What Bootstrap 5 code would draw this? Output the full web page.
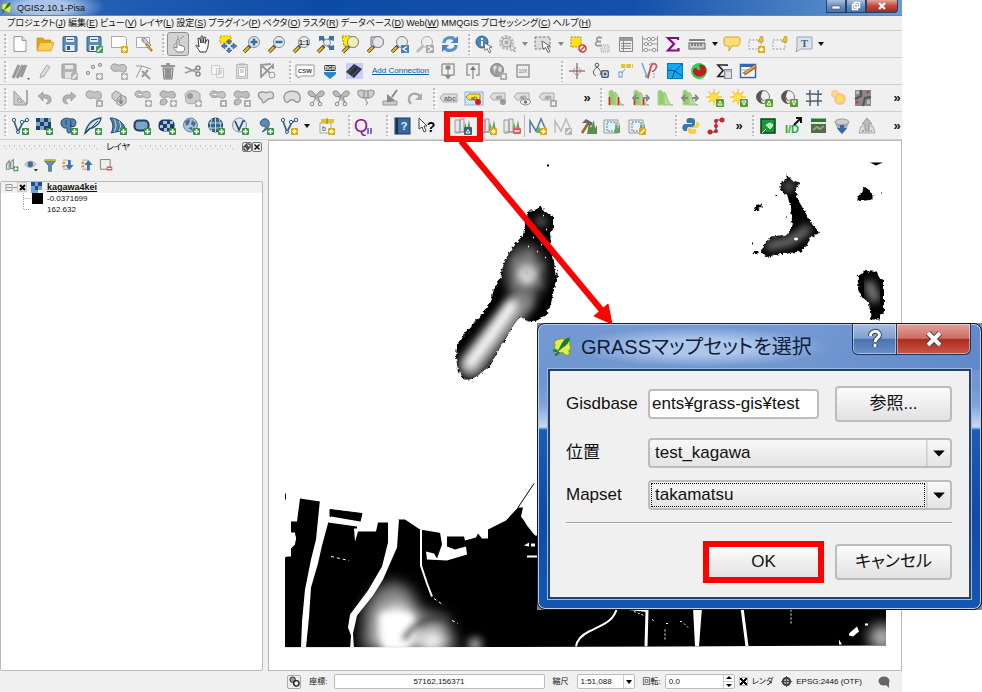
<!DOCTYPE html>
<html lang="ja">
<head>
<meta charset="utf-8">
<meta name="viewport" content="width=device-width, initial-scale=1">
<title>QGIS2.10.1-Pisa</title>
<link href="https://cdn.jsdelivr.net/npm/bootstrap@5.3.0/dist/css/bootstrap.min.css" rel="stylesheet">
<style>
body{font-family:"Liberation Sans","Noto Sans CJK JP",sans-serif;font-size:9px;line-height:12px;color:#111;background:#fff;font-feature-settings:"palt";height:100vh;overflow:hidden;padding-right:80px}
button{font:inherit;color:inherit}
.app-window{background:#f0f0f0;height:100%}
.title-strip{height:16px;background:radial-gradient(ellipse 60px 18px at 45px 7px,#a9c4e8 40%,transparent 100%),linear-gradient(90deg,#2d68b8,#0d4ca6 35%,#1350a9 70%,#4c83c6 90%,#6c9bd2);border-bottom:1px solid #6d85a8}
.win-ctl{height:13px;border:1px solid #24426e;border-top:0;width:20px;background:linear-gradient(#a9c1e0,#6a8dbd 50%,#4a72ac);padding:0}
.win-ctl.close-ctl{width:32px;background:linear-gradient(#e3a79a,#c4473a 50%,#a82a1f);border-radius:0 0 4px 0}
.menu-strip{height:15px;border-bottom:1px solid #ccc;padding-left:7px}
.menu-items{flex:0 1 584px}
.menu-items a{color:#111;text-decoration:none;white-space:nowrap}
.menu-items u{text-underline-offset:1px}
.tool-row{height:27px;border-bottom:1px solid #cfcfcf}
.tool-row.last-row{height:28px}
.grip{flex:0 0 10px;height:21px;background-image:radial-gradient(circle at 5px 1px,#bdbdbd 1px,transparent 1px),radial-gradient(circle at 7px 3px,#fff 1px,transparent 1px);background-size:10px 4px}
.tools{display:flex;justify-content:space-between;align-items:center;flex:0 0 auto}
.tools button{width:20px;height:24px;padding:0;border:0;background:none;display:flex;align-items:center;justify-content:center}
.tools button.drop{width:8px}
.tools button.active-tool{outline:1px solid #8f8f8f;background:#d2d2d2;border-radius:2px;height:22px}
.tools svg{width:20px;height:20px;flex:none}
.tools .drop svg{width:8px}
.w-20{width:20px}.w-45{width:45px}.w-69{width:69px}.w-95{width:95px}.w-119{width:119px}.w-144{width:144px}.w-191{width:191px}.w-267{width:267px}.w-292{width:292px}.w-326{width:326px}.w-351{width:351px}.w-415{width:415px}
.more{width:10px;font-size:13px;line-height:14px;font-weight:bold;padding:0;border:0;background:none;text-align:center}
.conn-link{font-size:8px;color:#00629e;width:58px;margin:0 8px;white-space:nowrap}
.sep-line{width:1px;height:22px;background:#bbb;margin:0 3px 0 2px}
.red-frame{position:absolute;left:-9px;top:-3px;width:39px;height:31px;border:6px solid #f00;pointer-events:none;z-index:3}
.side{flex:0 0 263px}
.dock-head{height:14px;padding:0 1px 0 2px}
.dots{height:6px;background-image:radial-gradient(circle,#c4c4c4 1px,transparent 1px),radial-gradient(circle,#d4d4d4 1px,transparent 1px);background-size:5px 6px,5px 6px;background-position:0 -1px,2px 2px}
.dock-btn{width:10px;height:10px;border:1px solid #777;border-radius:2px;background:#eee;padding:0;display:flex}
.dock-btn.extent-btn{width:14px;height:14px;border-color:#aaa}
.dock-tools{height:27px;padding:0 0 5px 5px}
.dock-tools .tools{width:108px}
.dock-tools .tools button{width:14px;height:18px}
.dock-tools .tools svg{width:14px;height:14px}
.tree-box{background:#fff;border:1px solid #b9b9b9;border-radius:2px;font-size:8px;line-height:11px}
.tree-row{height:11px}
.tree-row.picked{background:#f1f1f1}
.tree-row svg{width:46px;height:11px;flex:none}
.layer-name{font-size:9px}
.canvas{background:#fff;border:1px solid #b9b9b9;margin-left:5px;min-width:0}
.canvas svg{display:block}
.status{height:21px;padding-right:12px;font-size:8px}
.status input[type=text],.status select{height:15px;border:1px solid #bcbcbc;border-radius:2px;background:#fff;padding:0 3px;font-size:8px;line-height:12px;color:#111;appearance:none}
.status input.coord{width:211px;text-align:center;margin-left:6px}
.scale-box{width:58px}.spin-box{width:70px}
.pick-arrow{position:absolute;right:0;top:0;height:100%;pointer-events:none}
.tick{appearance:none;width:9px;height:9px;margin:0;border:1px solid #bbb;background:#eee}
.tick:checked{background:linear-gradient(45deg,transparent 36%,#000 37% 63%,transparent 64%),linear-gradient(-45deg,transparent 36%,#000 37% 63%,#fff 64%)}
.arrow-over{position:absolute;left:450px;top:138px;width:170px;height:190px;z-index:4;pointer-events:none}
.dlg-wrap{position:absolute;left:537px;top:323px;width:445px;z-index:3;background:linear-gradient(#8a8a8a,#333 20%,#222 80%,#888)}
.dlg{border:1px solid #0b1b38;border-radius:8px;box-shadow:inset 0 0 0 1px #b9d0ee;background:linear-gradient(90deg,transparent 60%,#3e6db355) 0 0/100% 46px no-repeat,linear-gradient(#7499d2,#6f96d0 60px,#7da2d8 80px,#c5daf2 103px,#1c5db4 106px,#0f4ba5 190px,#1556b3);padding:0 10px 10px}
.dlg-title{height:45px;font-size:20px;line-height:24px;color:#0f1d3c}
.title-glow{background:radial-gradient(ellipse closest-side,#adc7ea 40%,transparent);padding:8px 16px 8px 8px;margin-left:-8px}
.dlg-ctl{height:31px;border:1px solid #1d3763;border-top:0;padding:0;display:flex;align-items:center;justify-content:center;box-shadow:inset 0 0 0 1px #ffffff70}
.ctl-help{width:45px;border-radius:0 0 0 6px;background:linear-gradient(#a7bfe2,#7f9fce 48%,#4a73b1 50%,#6a90c8)}
.ctl-x{width:74px;border-left:0;border-radius:0 0 6px 0;background:linear-gradient(#dfa39c,#cf6d62 48%,#b02a1d 50%,#c8584a)}
.dlg-body{background:#f0f0f0;border:2px solid #24406e;outline:1px solid #9db9e2;padding:15px 17px 17px 16px;font-size:17px;line-height:20px}
.form-line{display:grid;grid-template-columns:82px minmax(0,1fr);align-items:center}
.form-line label{white-space:nowrap}
.fld{height:30px;border:2px solid #bcbcbc;border-radius:4px;background:#fff;padding:0 2px;font-size:17px;line-height:24px;color:#111;min-width:0}
input.fld{width:0}
select.fld{background:linear-gradient(#f8f8f8,#e4e4e4);padding:0 5px;appearance:none}
.focus-dots{position:absolute;left:3px;top:3px;right:27px;bottom:3px;border:1px dotted #000;pointer-events:none}
.push{height:36px;width:117px;border:2px solid #bcbcbc;border-radius:4px;background:linear-gradient(#fcfcfc,#e2e2e2);padding:0}
.push.push-ok{outline:6px solid #f00;outline-offset:-1px;width:111px;height:32px;border-width:1px;border-radius:0;margin-right:16px}
.rule{height:2px;background:#a3a3a3;border-bottom:1px solid #fff;margin:12px 0 20px}
</style>
<script src="https://cdn.jsdelivr.net/npm/bootstrap@5.3.0/dist/js/bootstrap.bundle.min.js"></script>
</head>
<body class="position-relative">
<svg class="d-none" aria-hidden="true">
<!-- corner badges -->
<symbol id="b-plus" viewBox="0 0 20 20"><rect x="12" y="12" width="7" height="7" rx="1" fill="#3f8d49"/><path d="M15.500 13v5M13 15.500h5" stroke="#fff" stroke-width="1.500"/></symbol>
<symbol id="b-star" viewBox="0 0 20 20"><rect x="12" y="12" width="7" height="7" rx="1" fill="#d9a91e"/><path d="M15.500 13v5M13 15.500h5M14 14l3 3M17 14l-3 3" stroke="#fff6c0"/></symbol>
<symbol id="b-gray" viewBox="0 0 20 20"><rect x="12" y="12" width="7" height="7" rx="1" fill="#b3b3b3"/><path d="M15.500 13v5M13 15.500h5M14 14l3 3M17 14l-3 3" stroke="#f4f4f4"/></symbol>
<symbol id="b-x" viewBox="0 0 20 20"><rect x="12" y="12" width="7" height="7" rx="1" fill="#aaa"/><path d="M14 14l3 3M17 14l-3 3" stroke="#fff" stroke-width="1.400"/></symbol>
<symbol id="b-min" viewBox="0 0 20 20"><rect x="11" y="12" width="8" height="6" rx="1" fill="#e35a58"/><path d="M12.500 15h5" stroke="#fff" stroke-width="1.500"/></symbol>
<symbol id="b-up" viewBox="0 0 20 20"><rect x="11" y="11" width="8" height="8" rx="1" fill="#5e9c35"/><path d="M13 17l2-4 2 4z" fill="none" stroke="#fff"/></symbol>
<symbol id="b-down" viewBox="0 0 20 20"><rect x="11" y="11" width="8" height="8" rx="1" fill="#5e9c35"/><path d="M13 13l2 4 2-4z" fill="none" stroke="#fff"/></symbol>
<symbol id="b-blue" viewBox="0 0 20 20"><rect x="11" y="11" width="8" height="8" rx="1" fill="#35607e"/><path d="M13 17l2-3.500 2 3.500z" fill="none" stroke="#fff"/></symbol>
<symbol id="b-pen" viewBox="0 0 20 20"><rect x="12" y="12" width="7" height="7" rx="1" fill="#4b9a55"/><path d="M13.500 17.500l4-4" stroke="#fff" stroke-width="1.500"/></symbol>
<symbol id="b-penG" viewBox="0 0 20 20"><rect x="12" y="12" width="7" height="7" rx="1" fill="#b5b5b5"/><path d="M13.500 17.500l4-4" stroke="#fff" stroke-width="1.500"/></symbol>
<symbol id="b-penY" viewBox="0 0 20 20"><rect x="12" y="12" width="7" height="7" rx="1" fill="#d9a91e"/><path d="M13.500 17.500l4-4" stroke="#fff" stroke-width="1.500"/></symbol>
<symbol id="caret" viewBox="0 0 8 20"><path d="M1 8h6l-3 4z" fill="#111"/></symbol>
<symbol id="caretG" viewBox="0 0 8 20"><path d="M1 8h6l-3 4z" fill="#888"/></symbol>
<!-- file and map navigation -->
<symbol id="new" viewBox="0 0 20 20"><path d="M4 2.500h8l4 4v11H4z" fill="#fff" stroke="#999"/><path d="M12 2.500v4h4" fill="#ddd" stroke="#999"/></symbol>
<symbol id="open" viewBox="0 0 20 20"><path d="M2 16V4h6l1 2h7v3" fill="#e0a520" stroke="#b8860b" stroke-width=".6"/><path d="M2 17L5 8.500h14L16 17z" fill="#f7cf57" stroke="#d99a12" stroke-width=".7"/></symbol>
<symbol id="save" viewBox="0 0 20 20"><rect x="3" y="2.500" width="14" height="15" rx="1" fill="#5d8cbc" stroke="#355f8a"/><rect x="6" y="3" width="8" height="5" fill="#e8eef4"/><path d="M7 5.500h6" stroke="#355f8a"/><rect x="5.500" y="11" width="9" height="6" fill="#e8eef4"/><rect x="7" y="12" width="3" height="4" fill="#355f8a"/></symbol>
<symbol id="saveG" viewBox="0 0 20 20"><rect x="3" y="3" width="14" height="14" rx="1" fill="#b5b5b5" stroke="#999"/><rect x="6" y="4" width="8" height="4" fill="#e9e9e9"/><rect x="6" y="11" width="7" height="6" fill="#e4e4e4"/></symbol>
<symbol id="layout" viewBox="0 0 20 20"><path d="M2.500 2.500h13l2 2v9h-15z" fill="#fff" stroke="#aaa"/></symbol>
<symbol id="wrench" viewBox="0 0 20 20"><path d="M2.500 3.500h13v10h-13z" fill="#fff" stroke="#aaa"/><path d="M8 5a3 3 0 0 1 5 2l4 4-2 2-4-4a3 3 0 0 1-3-4l2 2z" fill="#ccc" stroke="#777" stroke-width=".7"/><path d="M12 10l6 7" stroke="#9a7b1e" stroke-width="2.500"/><path d="M13 11l4 5" stroke="#f1c942"/></symbol>
<symbol id="touch" viewBox="0 0 20 20"><path d="M9 18c-2-3-4-4-3-5l3 1V6c0-1 2-1 2 0v5l5 1.500c1 .5 1 4-1 5.500z" fill="#fff" stroke="#777" stroke-width=".9"/><path d="M10 5V2M12 5l4-3M9 8L5 12" fill="none" stroke="#888" stroke-width=".8"/></symbol>
<symbol id="hand" viewBox="0 0 20 20"><path d="M7 18C5 14 2 12 3.500 11L6 13 5 5c0-1.500 1.500-1.500 2 0l1 4V3c0-1.500 2-1.500 2 0v6l1-5c.3-1.400 2-1 1.800.4L12 9.500l2-3.500c1-1 2 0 1.600 1L15 12c0 3-2 4-2 6z" fill="#fff" stroke="#333"/></symbol>
<symbol id="pansel" viewBox="0 0 20 20"><path d="M3 2h11v7H3z" fill="#ffe60a" stroke="#bda900" stroke-dasharray="2 1"/><g fill="#4a7cb2" stroke="#29527f" stroke-width=".5"><path d="M12 5l3 3h-2v2h-2V8H9zM12 19l3-3h-2v-2h-2v2H9zM4 12l4-3v2h2v2H8v2zM20 12l-4-3v2h-2v2h2v2z"/></g></symbol>
<symbol id="lens" viewBox="0 0 20 20"><path d="M2 18l6-6" stroke="#333" stroke-width="3.500"/><path d="M2 18l5-5" stroke="#eab422" stroke-width="2.300"/><circle cx="12" cy="8" r="5.500" fill="#e4ebee" stroke="#888"/></symbol>
<symbol id="lensG" viewBox="0 0 20 20"><path d="M2 18l6-6" stroke="#bbb" stroke-width="3"/><circle cx="12" cy="8" r="5.500" fill="#eee" stroke="#aaa"/></symbol>
<symbol id="o-plus" viewBox="0 0 20 20"><path d="M12 4.500v7M8.500 8h7" stroke="#2f6ead" stroke-width="2.500"/></symbol>
<symbol id="o-minus" viewBox="0 0 20 20"><path d="M8.500 8h7" stroke="#2f6ead" stroke-width="2.500"/></symbol>
<symbol id="o-one" viewBox="0 0 20 20"><text x="12" y="11" font-size="7" font-weight="bold" text-anchor="middle" fill="#222">1:1</text></symbol>
<symbol id="full" viewBox="0 0 20 20"><path d="M2 18l6-6" stroke="#333" stroke-width="3.500"/><path d="M2 18l5-5" stroke="#eab422" stroke-width="2.300"/><path d="M3 2h5v2l3 3-2 2-3-3-3 1zM18 2h-5v2l-3 3 2 2 3-3 3 1zM18 16h-5v-2l-3-3 2-2 3 3 3-1z" fill="#3f6fa3"/><circle cx="11" cy="8.500" r="3.500" fill="#e4ebee" stroke="#888"/></symbol>
<symbol id="o-sel" viewBox="0 0 20 20"><path d="M1 2h9v10H3z" fill="#ffe60a" stroke="#9d8d00" stroke-dasharray="2 1"/><circle cx="12" cy="8" r="5.500" fill="#f4edb4" stroke="#888"/></symbol>
<symbol id="o-layer" viewBox="0 0 20 20"><path d="M5 3h9v9H5z" fill="#d7d7de" stroke="#777"/><circle cx="12" cy="8" r="5.500" fill="#e4e4ea" stroke="#888"/></symbol>
<symbol id="o-prev" viewBox="0 0 20 20"><rect x="11" y="11" width="8" height="8" fill="#4a7db5"/><path d="M17 12.500l-4 2.500 4 2.500" fill="none" stroke="#fff" stroke-width="1.300"/></symbol>
<symbol id="o-next" viewBox="0 0 20 20"><rect x="11" y="11" width="8" height="8" fill="#aaa"/><path d="M13 12.500l4 2.500-4 2.500" fill="none" stroke="#fff" stroke-width="1.300"/></symbol>
<symbol id="refresh" viewBox="0 0 20 20"><path d="M4 9c0-6 9-7 11-3M16 11c0 6-9 7-11 3" fill="none" stroke="#5b93ca" stroke-width="3.200"/><path d="M18 2v7h-7zM2 18v-7h7z" fill="#4681bd"/></symbol>
<symbol id="ident" viewBox="0 0 20 20"><circle cx="8" cy="8" r="6" fill="#4d86bd" stroke="#2e6497"/><path d="M8 7v5M8 4v2" stroke="#fff" stroke-width="2"/><path d="M10 9l8 4-3 1 2 4-2 .5-2-4-2 2z" fill="#fff" stroke="#555" stroke-width=".8"/></symbol>
<symbol id="gear" viewBox="0 0 20 20"><circle cx="8.500" cy="8.500" r="6" fill="none" stroke="#bbb" stroke-width="3" stroke-dasharray="2.500 1.200"/><circle cx="8.500" cy="8.500" r="4.500" fill="#ddd" stroke="#999"/><circle cx="8.500" cy="8.500" r="2" fill="#aaa"/><path d="M12 11l6 3-2.500 1 2 3-3-2-1.500 1z" fill="#eee" stroke="#888" stroke-width=".7"/></symbol>
<symbol id="selrect" viewBox="0 0 20 20"><path d="M2 3h15v12H2z" fill="#ddd" stroke="#777" stroke-dasharray="2.500 1.500"/><path d="M9 7l8 5-3 .5 3 5-2 1-2.500-5L10 15z" fill="#fff" stroke="#444" stroke-width=".8"/></symbol>
<symbol id="desel" viewBox="0 0 20 20"><path d="M3 3h10v10H3z" fill="#ffe11a" stroke="#a89512" stroke-dasharray="2 1"/><circle cx="14.500" cy="14.500" r="3.500" fill="#fff" stroke="#dd3532" stroke-width="1.500"/><path d="M12 17l5-5" stroke="#dd3532" stroke-width="1.500"/></symbol>
<symbol id="eps" viewBox="0 0 20 20"><path d="M10 4c-4-2-7 1-4 3.500-4 1-3 6 3.500 3.500M6 7.500h3" fill="none" stroke="#999" stroke-width="1.800"/><path d="M9 11h8v7H9z" fill="#ddd" stroke="#aaa" stroke-dasharray="1 1"/></symbol>
<symbol id="tbl" viewBox="0 0 20 20"><path d="M3.500 3.500h13v14h-13z" fill="#eee" stroke="#888"/><path d="M3 5.500h14" stroke="#999" stroke-width="3"/><path d="M5 9.500h10M5 12h10M5 14.500h10M7.500 7v10" stroke="#888"/></symbol>
<symbol id="abacus" viewBox="0 0 20 20"><path d="M2.500 2v16M17.500 2v16M2 5h16M2 10h16M2 16h16" stroke="#999" fill="none"/><g fill="#fff" stroke="#999"><circle cx="9" cy="5" r="1.700"/><circle cx="13" cy="5" r="1.700"/><circle cx="6" cy="10" r="1.700"/><circle cx="10" cy="10" r="1.700"/><circle cx="6" cy="16" r="1.700"/><circle cx="14" cy="16" r="1.700"/></g></symbol>
<symbol id="sigma" viewBox="0 0 20 20"><path d="M15 6V4H5l6 6-6 6.500h10.500V14" fill="none" stroke="#8b0a86" stroke-width="2.200"/></symbol>
<symbol id="ruler" viewBox="0 0 20 20"><path d="M2 6h16" stroke="#444" stroke-width="1.300"/><rect x="2" y="9" width="16" height="6" fill="#c9ced3" stroke="#666"/><path d="M5 9v3M8 9v3M11 9v3M14 9v3" stroke="#444"/></symbol>
<symbol id="tip" viewBox="0 0 20 20"><path d="M4 3h12c2 0 2 1 2 4 0 4-1 5-3 5h-5l-3 5V12H4c-2 0-2-2-2-5 0-3 0-4 2-4z" fill="#fbdf74" stroke="#d3a62c"/></symbol>
<symbol id="bmk" viewBox="0 0 20 20"><path d="M3 6h12v9H3z" fill="#f2f2f2" stroke="#999" stroke-dasharray="2 1.500"/><path d="M12 8l3-6 2 1v5z" fill="#edc63a" stroke="#b5901b" stroke-width=".7"/></symbol>
<symbol id="txt" viewBox="0 0 20 20"><path d="M4 3h15v12H8l-5 3 1-4z" fill="#dbe4ee" stroke="#9aa5b1"/><text x="11.500" y="13" font-size="11" font-weight="bold" font-family="Liberation Serif" text-anchor="middle" fill="#47617b">T</text></symbol>
<!-- digitising -->
<symbol id="pens" viewBox="0 0 20 20"><path d="M3 17l6-13M7 17l6-13M11 16l5-12" stroke="#999" stroke-width="3"/><path d="M17 17h3l-1.500 2z" fill="#666"/></symbol>
<symbol id="pen1" viewBox="0 0 20 20"><path d="M5 17l1-4 6-9 3 2-6 9z" fill="#ddd" stroke="#aaa"/></symbol>
<symbol id="pts" viewBox="0 0 20 20"><g fill="#ccc" stroke="#999"><circle cx="4" cy="12" r="1.700"/><circle cx="9" cy="6" r="1.700"/><circle cx="16" cy="4" r="1.700"/></g></symbol>
<symbol id="blob" viewBox="0 0 20 20"><path d="M3 4c3-3 5 1 8 0 6-2 7 2 6 6-3 3-6-1-8 0-5 2-9-3-6-6z" fill="#c4c4c4" stroke="#9a9a9a"/></symbol>
<symbol id="node" viewBox="0 0 20 20"><path d="M3 17L9 5l9 3M3 5h6" fill="none" stroke="#999"/><path d="M9 10l8 8M15 9l-6 7" stroke="#999" stroke-width="2"/></symbol>
<symbol id="trash" viewBox="0 0 20 20"><path d="M5 7h10l-1 11H6z" fill="#ccc" stroke="#777"/><path d="M3 5h14M8 3h4M8 8v9M10 8v9M12 8v9" stroke="#777" stroke-width="1.400"/></symbol>
<symbol id="cut" viewBox="0 0 20 20"><path d="M2 6l11 5M2 12l11-4" stroke="#999" stroke-width="1.500"/><circle cx="15" cy="7" r="2" fill="none" stroke="#888" stroke-width="1.500"/><circle cx="15" cy="13" r="2" fill="none" stroke="#888" stroke-width="1.500"/></symbol>
<symbol id="copy" viewBox="0 0 20 20"><path d="M3.500 4.500h8v9h-8zM8.500 7.500h7v9h-7z" fill="#f4f4f4" stroke="#ccc"/><path d="M10 10h4M10 12h4" stroke="#bbb"/></symbol>
<symbol id="paste" viewBox="0 0 20 20"><path d="M4.500 3.500h11v14h-11z" fill="#ddd" stroke="#bbb"/><path d="M6.500 6.500h7v9h-7z" fill="#fff" stroke="#bbb"/><path d="M7 3h6M8 9h4M8 11h4" stroke="#aaa"/></symbol>
<symbol id="netx" viewBox="0 0 20 20"><path d="M4 3v14M4 4l12 11M4 16L16 4v4M4 4l10-1" fill="none" stroke="#999" stroke-width="1.800"/><circle cx="15" cy="14" r="3" fill="#eee" stroke="#999"/></symbol>
<symbol id="csw" viewBox="0 0 20 20"><path d="M1 4h18v11H6l-3 2v-2H1z" fill="#fff" stroke="#999"/><text x="10" y="12" font-size="6" font-weight="bold" text-anchor="middle" fill="#444">CSW</text></symbol>
<symbol id="bgr" viewBox="0 0 20 20"><rect x="4" y="4" width="12" height="6" rx="2" fill="#333"/><text x="10" y="9" font-size="5" font-weight="bold" text-anchor="middle" fill="#fff">BGR</text><path d="M4 11h12v2l-6 5-6-5z" fill="#1d8bd1"/></symbol>
<symbol id="chip" viewBox="0 0 20 20"><path d="M2 2h17v16H2z" fill="#ccccfa"/><path d="M2 11l8-8 8 5-8 9z" fill="#2d3340"/><path d="M4 12l7-7M8 15l7-7" stroke="#545d70"/></symbol>
<symbol id="tdown" viewBox="0 0 20 20"><path d="M4 3h12v11h-3M4 3v11h3" fill="none" stroke="#999" stroke-width="1.500"/><path d="M10 6v9M7 14l3 4 3-4zM8 5h4v3H8z" fill="#888" stroke="#888"/></symbol>
<symbol id="tup" viewBox="0 0 20 20"><path d="M4 3h12v11h-3M4 3v11h3M10 8v10" fill="none" stroke="#999" stroke-width="1.500"/><path d="M7 9l3-4 3 4z" fill="#777"/></symbol>
<symbol id="globeG" viewBox="0 0 20 20"><circle cx="9" cy="9" r="6.500" fill="#9c9c9c" stroke="#888"/><path d="M5 6c3-3 5 0 3 2s0 4-1 5M11 5l3 2-1 4-3-1z" fill="#ddd"/></symbol>
<symbol id="tenx" viewBox="0 0 20 20"><rect x="4" y="4" width="12" height="12" fill="#eee" stroke="#999" stroke-width="1.500"/><text x="10" y="12" font-size="5" text-anchor="middle" fill="#777">10X</text></symbol>
<symbol id="cross" viewBox="0 0 20 20"><path d="M10 2v16M2 10h16" stroke="#555"/><circle cx="10" cy="10" r="3.500" fill="none" stroke="#d75b4d" stroke-dasharray="2 1"/></symbol>
<symbol id="gps" viewBox="0 0 20 20"><circle cx="6" cy="4" r="1.800" fill="none" stroke="#555"/><path d="M6 6c-4 3-5 7-1 9M6 6c4 3 4 6 3 8" fill="none" stroke="#555"/><rect x="10" y="9" width="8" height="8" rx="2" fill="#47647c"/><path d="M12 11h4v4h-4z" fill="none" stroke="#fff"/></symbol>
<symbol id="sat" viewBox="0 0 20 20"><path d="M5 5h12" stroke="#dcc62e" stroke-width="4" stroke-dasharray="4.500 1"/><path d="M9 8l-3 4" stroke="#999"/><rect x="3" y="11" width="3" height="5" fill="#fff" stroke="#6d91b4"/></symbol>
<symbol id="topo" viewBox="0 0 20 20"><path d="M2 2l5 14 5-12M5 15l4 2" fill="none" stroke="#7da4cd" stroke-width="1.500"/><path d="M8 17l3-12c2-4 7-2 5 2s-4 3-4 3" fill="none" stroke="#d6434a" stroke-width="1.600"/><path d="M9 4c3-3 8-2 8 1s-3 4-4 6" fill="none" stroke="#888"/><path d="M14 12v6" stroke="#999" stroke-dasharray="2 1"/></symbol>
<symbol id="voron" viewBox="0 0 20 20"><rect x="2.500" y="2.500" width="15" height="15" fill="#11a8f4" stroke="#0579b5"/><path d="M10 10L17 3M10 10l7 5M10 10l-7-1M10 10l-3 7" stroke="#064b73"/></symbol>
<symbol id="heat" viewBox="0 0 20 20"><rect x="2" y="2" width="17" height="16" fill="#f9fff9"/><circle cx="10" cy="10" r="8" fill="#33ce55"/><path d="M10 4c7-2 9 6 6 9-4 5-12 2-12-3 0-3 3-4 4-2 1 2 4 2 3-1z" fill="#c41c20"/></symbol>
<symbol id="sumcalc" viewBox="0 0 20 20"><path d="M13 5V4H4l5 5.500-5 6h7" fill="none" stroke="#222" stroke-width="1.700"/><rect x="10.500" y="8.500" width="7" height="9" fill="#b3c2d4" stroke="#888"/><path d="M12 12h5M12 14h5M12 16h5" stroke="#fff"/></symbol>
<symbol id="form" viewBox="0 0 20 20"><rect x="2.500" y="3.500" width="15" height="13" fill="#fff" stroke="#3567b0" stroke-width="1.500"/><path d="M3 5h14" stroke="#3567b0" stroke-width="2"/><path d="M4 9h5M4 12h5" stroke="#7b9fd1"/><path d="M6 13L18 5" stroke="#b66a19" stroke-width="3.500"/><path d="M7 12L17 5" stroke="#f3b24c" stroke-width="1.500"/></symbol>
<!-- advanced digitising -->
<symbol id="setsq" viewBox="0 0 20 20"><path d="M4 3v14h13z" fill="#ccc" stroke="#999"/><path d="M8 10v4h4z" fill="#f0f0f0" stroke="#999"/><path d="M17 2v14" stroke="#aaa" stroke-width="2"/></symbol>
<symbol id="undo" viewBox="0 0 20 20"><path d="M3 8l5-4v3c6-1 9 2 8 6-1 3-4 3-5 3 4-4 2-6-3-6v3z" fill="#b3b3b3" stroke="#8c8c8c" stroke-width=".6"/></symbol>
<symbol id="redo" viewBox="0 0 20 20"><path d="M17 8l-5-4v3c-6-1-9 2-8 6 1 3 4 3 5 3-4-4-2-6 3-6v3z" fill="#b3b3b3" stroke="#8c8c8c" stroke-width=".6"/></symbol>
<symbol id="hexes" viewBox="0 0 20 20"><path d="M3 6l4-3 5 3-1 6-5 1-3-3zM8 11l4-4 5 2v6l-5 3-4-2z" fill="#ccc" stroke="#999"/><path d="M12 9v5M10 13l2 3 2-3z" fill="#888" stroke="#888"/></symbol>
<symbol id="blob2" viewBox="0 0 20 20"><path d="M3 4c3-3 5 1 8 0 6-2 7 2 6 5-3 3-6-1-8 0-5 2-9-2-6-5zM3 12c3-2 7-1 6 2s-5 4-7 2z" fill="#bdbdbd" stroke="#999"/></symbol>
<symbol id="ring" viewBox="0 0 20 20"><path d="M3 4c3-3 5 1 8 0 6-2 7 2 6 5-3 3-6-1-8 0-5 2-9-2-6-5z" fill="#c6c6c6" stroke="#999"/><ellipse cx="7" cy="6.500" rx="2.500" ry="1.500" fill="#fff" stroke="#999"/></symbol>
<symbol id="fill" viewBox="0 0 20 20"><path d="M2 6c3-5 13-4 15 0v6c-4 4-11 5-14 2z" fill="#ccc" stroke="#aaa"/><circle cx="7" cy="8" r="3" fill="#999"/></symbol>
<symbol id="reshape" viewBox="0 0 20 20"><path d="M2 5c4-3 7 1 10-1 5-1 5 3 4 6-3 1-5 0-7 3-2 2-4 3-4-1-3-2-4-5-3-7z" fill="#ddd" stroke="#999" stroke-width="1.400"/></symbol>
<symbol id="hull" viewBox="0 0 20 20"><path d="M2 9c0-7 14-8 16-1 1 4-1 7-4 6-3-3-5-3-8 0-3 1-4-2-4-5z" fill="#ddd" stroke="#999" stroke-width="1.400"/></symbol>
<symbol id="split" viewBox="0 0 20 20"><path d="M2 4c4-3 6 1 8 4 2-3 4-7 8-4 1 4-3 5-6 5l3 8M10 8c-4 2-8 0-8-4M10 9l-4 8" fill="#bbb" stroke="#888"/><circle cx="6" cy="16" r="1.800" fill="#eee" stroke="#888"/><circle cx="14" cy="16" r="1.800" fill="#eee" stroke="#888"/></symbol>
<symbol id="merge" viewBox="0 0 20 20"><path d="M2 3c4-2 6 0 8 0s5-2 8 0c1 5-3 7-6 7H8C4 10 1 7 2 3zM8 3v7M12 3v7M10 10c-2 3 4 4 0 7" fill="#ccc" stroke="#888"/></symbol>
<symbol id="brush" viewBox="0 0 20 20"><path d="M3 13h14v4H3z" fill="#ccc" stroke="#999"/><path d="M17 2l-5 7M8 8l5 4-5 1z" fill="#999" stroke="#888" stroke-width="2"/></symbol>
<symbol id="rot" viewBox="0 0 20 20"><path d="M6 16C0 9 8 2 15 8" fill="none" stroke="#aaa" stroke-width="2.500"/><path d="M17 5v7h-7z" fill="#aaa"/></symbol>
<symbol id="abc" viewBox="0 0 20 20"><path d="M1 10l3-4h14v8H4z" fill="#ddd" stroke="#aaa"/><text x="11" y="12.500" font-size="7" font-weight="bold" text-anchor="middle" fill="#777">abc</text></symbol>
<symbol id="abcY" viewBox="0 0 20 20"><rect x="1" y="4" width="18" height="13" fill="#d6e5fb" stroke="#8ab0e6"/><path d="M2 9l3-3h11v6H5z" fill="#ffe24a" stroke="#a38d12"/><text x="10" y="11.500" font-size="6" text-anchor="middle" fill="#444">ab</text><circle cx="14" cy="14" r="3" fill="#d01f23"/></symbol>
<symbol id="abcS" viewBox="0 0 20 20"><path d="M1 9l3-4h12v7H4z" fill="#ddd" stroke="#aaa"/><text x="10" y="11" font-size="6" text-anchor="middle" fill="#777">ab</text></symbol>
<symbol id="o-dot" viewBox="0 0 20 20"><circle cx="14" cy="14" r="3" fill="#999"/></symbol>
<symbol id="o-eye" viewBox="0 0 20 20"><path d="M7 14c3-4 8-4 11 0-3 4-8 4-11 0z" fill="#eee" stroke="#888"/><circle cx="12.500" cy="14" r="1.700" fill="#777"/></symbol>
<!-- raster -->
<symbol id="hist" viewBox="0 0 20 20"><path d="M3 17V3l3-1 3 4v11z" fill="#8fd35f" stroke="#b5cfa5"/><path d="M9 17V4c4 2 2 12 9 13z" fill="#b7dba0" stroke="#9cc089"/></symbol>
<symbol id="o-red" viewBox="0 0 20 20"><path d="M3.500 17V9M12.500 17v-8" stroke="#e02222" stroke-width="1.600"/></symbol>
<symbol id="o-lr" viewBox="0 0 20 20"><path d="M8 10H2M12 10h6M5 7l-3 3 3 3M15 7l3 3-3 3" fill="none" stroke="#888" stroke-width="1.800"/></symbol>
<symbol id="sun" viewBox="0 0 20 20"><circle cx="9" cy="9" r="4.500" fill="#f7ce2c"/><path d="M9 1v16M1 9h16M3.500 3.500l11 11M14.500 3.500l-11 11" stroke="#f3c822" stroke-width="1.300"/><circle cx="9" cy="9" r="3.500" fill="#ffe14c"/></symbol>
<symbol id="contrast" viewBox="0 0 20 20"><circle cx="9" cy="9" r="6.500" fill="#eee" stroke="#777"/><path d="M9 2.500a6.500 6.500 0 0 0 0 13c-4-4-2-9 0-13z" fill="#555"/><path d="M9 4a5 5 0 0 0 3 9c-5 1-8-4-3-9z" fill="#555"/></symbol>
<symbol id="grid" viewBox="0 0 20 20"><path d="M6 2c-1 6 1 9 0 16M14 2c1 6-1 9 0 16M2 6c6-1 9 1 16 0M2 13c6 1 9-1 16 0" fill="none" stroke="#4f6173" stroke-width="1.500"/></symbol>
<symbol id="heat2" viewBox="0 0 20 20"><circle cx="7" cy="6" r="4" fill="#fdc8a2"/><circle cx="12" cy="11" r="6" fill="#fdbf9b"/><circle cx="7" cy="6" r="2" fill="#fbe35f"/><circle cx="12" cy="11" r="3.500" fill="#fbe35f"/></symbol>
<symbol id="georef" viewBox="0 0 20 20"><rect x="2" y="2" width="16" height="16" fill="#888"/><path d="M8 2v6l-6 3M10 18l2-8 6-1" stroke="#555" stroke-width="2" fill="none"/><path d="M3 3h3v3H3zM14 12h3v4h-3z" fill="#bbb"/><circle cx="4" cy="14" r="1.500" fill="#d33"/><circle cx="15" cy="4" r="1.500" fill="#d33"/></symbol>
<!-- layers -->
<symbol id="vec" viewBox="0 0 20 20"><path d="M4 5l4 11 5-10 3-1" fill="none" stroke="#3b5f80" stroke-width="1.700"/><g fill="#dfe8f0" stroke="#3b5f80"><circle cx="4" cy="4" r="1.700"/><circle cx="12" cy="6" r="1.700"/><circle cx="17" cy="4" r="1.700"/><circle cx="8" cy="16" r="1.500"/></g></symbol>
<symbol id="ras" viewBox="0 0 20 20"><path d="M2 2h15v12H2z" fill="#1d4468"/><path d="M6 2h4v4H6zM14 2h3v4h-3zM2 6h4v4H2zM10 6h4v4h-4zM6 10h4v4H6z" fill="#7fa6cc"/></symbol>
<symbol id="pg" viewBox="0 0 20 20"><path d="M2 7c0-6 8-5 9-4 6-1 7 3 5 7l-3 1-1-2v7c-1 2-4 1-4-1v-3H5C3 11 2 9 2 7z" fill="#5584ae" stroke="#234c70"/><path d="M7 4v5M11 4c2 3 0 5 1 7" stroke="#234c70" fill="none"/></symbol>
<symbol id="feather" viewBox="0 0 20 20"><path d="M2 17C4 9 9 3 18 2c0 4-4 9-12 11z" fill="#cfdfeb" stroke="#285678" stroke-width="1.300"/><path d="M2 18L15 5" stroke="#285678"/></symbol>
<symbol id="mssql" viewBox="0 0 20 20"><path d="M2 2c7 0 13 4 15 10l-5 3-9 2c3-5 2-10-1-15z" fill="#48799f" stroke="#1d4a6d"/><path d="M6 3c3 5 2 9 0 13M11 5c2 3 2 7 0 10" stroke="#cfe0ee" fill="none"/></symbol>
<symbol id="ora" viewBox="0 0 20 20"><rect x="2.500" y="4.500" width="14" height="10" rx="4" fill="#7da3c7" stroke="#1d3f63" stroke-width="2"/></symbol>
<symbol id="orar" viewBox="0 0 20 20"><rect x="2.500" y="4.500" width="14" height="10" rx="4" fill="#1d3f63" stroke="#1d3f63" stroke-width="2"/><path d="M6 5h4v3H6zM13 5h3v3h-3zM10 8h3v4h-3zM3 9h3v3H3zM7 12h3v3H7z" fill="#a9c3dd"/></symbol>
<symbol id="wms" viewBox="0 0 20 20"><circle cx="9.500" cy="9" r="7" fill="#a9c3da" stroke="#5f85a8"/><path d="M4 5l5-2-1 5-3 2zM11 4l4 3-2 4-3-3zM7 12l4-1 1 4z" fill="#486f94"/></symbol>
<symbol id="wcs" viewBox="0 0 20 20"><circle cx="9.500" cy="9" r="7" fill="#376893" stroke="#1c4163"/><path d="M3 7h13M3 12h13M9.500 2v14M6 3c-2 5-2 8 0 12M13 3c2 5 2 8 0 12" stroke="#c8dceb" fill="none"/></symbol>
<symbol id="wfs" viewBox="0 0 20 20"><circle cx="9.500" cy="9" r="7" fill="#dfe8f0" stroke="#7899b7"/><path d="M5 5l4 9 4-9 2 0" fill="none" stroke="#274c6e" stroke-width="1.700"/></symbol>
<symbol id="comma" viewBox="0 0 20 20"><path d="M6 5c2-3 7-3 8 1 1 5-2 8-7 10 3-3 4-4 3-6-4 1-6-2-4-5z" fill="#5a8ab5" stroke="#28567f"/></symbol>
<symbol id="virt" viewBox="0 0 20 20"><path d="M4 7h11v10H4z" fill="#f3f3f3" stroke="#aaa"/><text x="6" y="15" font-size="7" fill="#345">b</text><path d="M5 5h13" stroke="#dcc62e" stroke-width="4"/><path d="M11 2v6" stroke="#8a7b1c"/></symbol>
<symbol id="qii" viewBox="0 0 20 20"><text x="0" y="16" font-size="18" fill="#8b1290">Q</text><path d="M14 12v6M17 12v6" stroke="#4b4fb4" stroke-width="1.500"/></symbol>
<symbol id="book" viewBox="0 0 20 20"><rect x="3" y="2" width="15" height="16" fill="#38699c" stroke="#1d3d60"/><path d="M5 2v16" stroke="#1a2f48" stroke-width="2"/><text x="12" y="14" font-size="11" font-weight="bold" text-anchor="middle" fill="#e6eef7">?</text></symbol>
<symbol id="what" viewBox="0 0 20 20"><path d="M2 2l8 8H7l2 5-2 1-2-5-3 2z" fill="#fff" stroke="#444"/><text x="14" y="16" font-size="14" font-weight="bold" text-anchor="middle">?</text></symbol>
<!-- GRASS -->
<symbol id="mapset" viewBox="0 0 20 20"><path d="M2 4h5v13H2zM7 3h4v13H7z" fill="#e6e6e6" stroke="#999"/><path d="M11 15l1-9 2 7 2-9 2 11z" fill="#62a558"/><path d="M3 16h15" stroke="#999"/></symbol>
<symbol id="gvec" viewBox="0 0 20 20"><path d="M2 17V5l6 10 5-12 4 9" fill="none" stroke="#4f7b9e" stroke-width="1.500"/><path d="M8 17l3-7 3 7 3-9 1 9z" fill="#6fae62"/></symbol>
<symbol id="gvecG" viewBox="0 0 20 20"><path d="M2 17V5l6 10 5-12 4 9" fill="none" stroke="#bbb" stroke-width="1.500"/></symbol>
<symbol id="gtool" viewBox="0 0 20 20"><path d="M9 18l2-12 2 6 3-8 1 8 2-3v9z" fill="#5c8e52"/><path d="M4 17l7-11" stroke="#9a6622" stroke-width="2.500"/><path d="M4 7l4-4 7 4-2 3-4-3z" fill="#666"/></symbol>
<symbol id="greg" viewBox="0 0 20 20"><path d="M2 4h14v13H2z" fill="#eee" stroke="#999"/><path d="M5 6h9v9H5z" fill="#e7f3fb" stroke="#3f80b0" stroke-dasharray="2 1"/><path d="M12 17l2-10 2 6 2-6v10z" fill="#62a558"/></symbol>
<symbol id="py" viewBox="0 0 20 20"><path d="M10 2c-5 0-5 2-4 5h5v1H4c-4 1-3 7 0 7h2c0-4 1-4 4-4s4-1 4-4V5c0-2-1-3-4-3z" fill="#3c76a9"/><path d="M11 18c5 0 5-2 4-5h-5v-1h6c3-1 3-6 0-6h-1c0 4-1 5-4 5s-4 1-4 4c0 2 1 3 4 3z" fill="#f9d13f"/></symbol>
<symbol id="route" viewBox="0 0 20 20"><path d="M4 16h6V10V4h6" fill="none" stroke="#4f74ae" stroke-width="1.500"/><g fill="#d62222"><circle cx="4" cy="16" r="2.500"/><circle cx="10" cy="5" r="2"/><circle cx="10" cy="10" r="2"/><circle cx="10" cy="15" r="2"/><circle cx="16" cy="4" r="2.500"/></g></symbol>
<symbol id="plug" viewBox="0 0 20 20"><rect x="3" y="3" width="14" height="14" fill="#18983a" stroke="#0b4219" stroke-width="1.500"/><path d="M4 17l4-4M8 9l4 4 3-4-3-2z" fill="#b8efb9" stroke="#e4ffe4"/></symbol>
<symbol id="idx" viewBox="0 0 20 20"><text x="9" y="17" font-size="11" font-weight="bold" text-anchor="middle" fill="#22ab3a">I/D</text><path d="M11 9l7-7M13 2h5v5" stroke="#111" stroke-width="2" fill="none"/></symbol>
<symbol id="photo" viewBox="0 0 20 20"><rect x="3" y="3" width="15" height="14" fill="#536b47"/><path d="M3 4h15" stroke="#277a2d" stroke-width="3"/><path d="M3 7h15" stroke="#dce8dc" stroke-width="2"/><path d="M5 14l4-3 3 2 4-3" stroke="#8fa57f" stroke-width="2" fill="none"/></symbol>
<symbol id="dl" viewBox="0 0 20 20"><path d="M3 7l3 7 4 4 4-4 3-7" fill="#aaa"/><ellipse cx="10" cy="6" rx="7" ry="3" fill="#ccc" stroke="#999"/><path d="M8 9h4v3h3l-5 6-5-6h3z" fill="#3467ad"/></symbol>
<symbol id="ul" viewBox="0 0 20 20"><path d="M4 10h12l2 7H2z" fill="#ddd" stroke="#aaa"/><path d="M8 14V8H5l5-6 5 6h-3v6z" fill="#bbb" stroke="#999"/><path d="M5 15h10" stroke="#aaa" stroke-width="2" stroke-dasharray="2 1"/></symbol>
<!-- layer panel -->
<symbol id="grp" viewBox="0 0 20 20"><path d="M2 16V9l4-5v12zM8 15V6l4-4v13z" fill="#d8e2e5" stroke="#7a8a8d" stroke-width="1.500"/></symbol>
<symbol id="eye" viewBox="0 0 20 20"><path d="M1 9c5-6 12-6 16 0-5 6-12 6-16 0z" fill="#ddd" stroke="#888"/><circle cx="9" cy="9" r="4" fill="#3e6f9b"/><path d="M14 16h6l-3 3z"/></symbol>
<symbol id="funnel" viewBox="0 0 20 20"><path d="M2 4h16l-6 7v8H8v-8z" fill="#5c8cbc" stroke="#315f8d"/><path d="M2 3h16" stroke="#c4b440" stroke-width="3"/></symbol>
<symbol id="expand" viewBox="0 0 20 20"><path d="M3 3h8M3 16h8" stroke="#bbb" stroke-width="2"/><path d="M2 7h4M2 12h4" stroke="#e99a28" stroke-width="3"/><path d="M10 3h4v7h4l-6 7-6-7h4z" fill="#3e73ab"/></symbol>
<symbol id="collapse" viewBox="0 0 20 20"><path d="M3 3h8M3 16h8" stroke="#bbb" stroke-width="2"/><path d="M2 7h4M2 12h4" stroke="#e99a28" stroke-width="3"/><path d="M10 18h4v-8h4l-6-7-6 7h4z" fill="#3e73ab"/></symbol>
<symbol id="rm" viewBox="0 0 20 20"><rect x="2" y="2" width="14" height="14" rx="1" fill="#eee" stroke="#888" stroke-width="1.500"/></symbol>
<symbol id="leaf" viewBox="0 0 20 20"><path d="M10 2l3 1 4 1v4l1 3-2 3 1 3-3 1-2-1-2-2-3 1-2-3-3-2 1-3-1-3 3-2z" fill="#e6ea55" stroke="#78a623"/><path d="M17 1c-4 0-6 3-8 6l-4 8 6-5c3-1 6-5 6-9z" fill="#197c2f"/><path d="M1 13l4 1M3 18l4-3" stroke="#197c2f" stroke-width="2"/></symbol>
</svg>

<div class="app-window d-flex flex-column">
  <header class="title-strip d-flex align-items-center">
    <svg width="13" height="12" viewBox="0 0 20 20" aria-hidden="true"><use href="#leaf"/></svg>
    <span class="ms-1">QGIS2.10.1-Pisa</span>
    <div class="d-flex ms-auto me-1 align-self-start">
      <button class="win-ctl d-flex" aria-label="最小化"><svg width="18" height="12"><path d="M5 6h8v3H5z" fill="#fff" stroke="#446" stroke-width=".6"/></svg></button>
      <button class="win-ctl d-flex" aria-label="元に戻す"><svg width="18" height="12"><path d="M7.500 2.500h5v5h-5zM5.500 4.500h5v5h-5z" fill="#6887b5" stroke="#fff" stroke-width="1.400"/></svg></button>
      <button class="win-ctl close-ctl d-flex" aria-label="閉じる"><svg width="30" height="12"><path d="M12 3l6 6M18 3l-6 6" stroke="#fff" stroke-width="2.300"/></svg></button>
    </div>
  </header>
  <nav class="menu-strip d-flex align-items-center" aria-label="メニュー">
    <div class="menu-items d-flex justify-content-between">
      <a href="#">プロジェクト(<u>J</u>)</a><a href="#">編集(<u>E</u>)</a><a href="#">ビュー(<u>V</u>)</a><a href="#">レイヤ(<u>L</u>)</a><a href="#">設定(<u>S</u>)</a><a href="#">プラグイン(<u>P</u>)</a><a href="#">ベクタ(<u>O</u>)</a><a href="#">ラスタ(<u>R</u>)</a><a href="#">データベース(<u>D</u>)</a><a href="#">Web(<u>W</u>)</a><a href="#">MMQGIS</a><a href="#">プロセッシング(<u>C</u>)</a><a href="#">ヘルプ(<u>H</u>)</a>
    </div>
  </nav>

  <div class="tool-row d-flex align-items-center">
    <span class="grip"></span>
    <div class="tools w-144" data-tools="new open save save,b-pen layout,b-star wrench"></div>
    <span class="grip ms-1"></span>
    <div class="tools w-292" data-tools="touch! hand pansel lens,o-plus lens,o-minus lens,o-one full lens,o-sel lens,o-layer lens,o-prev lensG,o-next refresh"></div>
    <span class="grip ms-1"></span>
    <div class="tools w-351" data-tools="ident gear caretG selrect caretG desel eps tbl abacus sigma ruler caret tip bmk,b-star bmk txt caret"></div>
  </div>

  <div class="tool-row d-flex align-items-center">
    <span class="grip"></span>
    <div class="tools w-267" data-tools="pens pen1 saveG,b-penG pts,b-gray blob,b-gray node trash cut copy paste netx"></div>
    <span class="grip ms-2"></span>
    <div class="tools w-69" data-tools="csw bgr chip"></div>
    <a class="conn-link" href="#">Add Connection</a>
    <div class="tools w-95" data-tools="tdown tup globeG,b-x tenx"></div>
    <span class="grip ms-4"></span>
    <div class="tools w-191" data-tools="cross gps sat topo voron heat sumcalc form"></div>
  </div>

  <div class="tool-row d-flex align-items-center">
    <span class="grip"></span>
    <div class="tools w-415" data-tools="setsq undo redo blob,b-x hexes ring,b-gray blob2,b-gray fill,b-gray ring,b-x blob2,b-x reshape hull split split merge brush rot"></div>
    <span class="grip ms-1"></span>
    <div class="tools w-119" data-tools="abc abcY abcS,o-dot abcS,o-eye abcS,b-x"></div>
    <button class="more ms-4" aria-label="その他">»</button>
    <span class="grip ms-1"></span>
    <div class="tools w-267" data-tools="hist,o-red hist,o-red,o-lr hist hist,o-lr sun,b-up sun,b-down contrast,b-up contrast,b-down grid heat2 georef"></div>
    <button class="more ms-auto" aria-label="その他">»</button>
  </div>

  <div class="tool-row last-row d-flex align-items-center">
    <span class="grip"></span>
    <div class="tools w-326" data-tools="vec,b-plus ras,b-plus pg,b-plus feather,b-plus mssql,b-plus ora,b-plus orar,b-plus wms,b-plus wcs,b-plus wfs,b-plus comma,b-plus vec,b-star caret virt,b-star"></div>
    <span class="grip ms-2"></span>
    <div class="tools w-20" data-tools="qii"></div>
    <span class="grip ms-2"></span>
    <div class="tools w-45" data-tools="book what"></div>
    <div class="position-relative ms-3">
      <div class="tools w-69" data-tools="mapset,b-blue mapset,b-star mapset,b-min"></div>
      <span class="red-frame"></span>
    </div>
    <span class="sep-line"></span>
    <div class="tools w-119" data-tools="gvec,b-star gvecG,b-penG gtool greg greg,b-penY"></div>
    <span class="grip ms-4"></span>
    <div class="tools w-45" data-tools="py route"></div>
    <button class="more ms-2" aria-label="その他">»</button>
    <span class="grip ms-1"></span>
    <div class="tools w-119" data-tools="plug idx photo dl ul"></div>
    <button class="more ms-auto" aria-label="その他">»</button>
  </div>

  <main class="d-flex flex-grow-1">
    <aside class="side d-flex flex-column">
      <div class="dock-head d-flex align-items-center gap-2">
        <span class="dots flex-grow-1"></span><span>レイヤ</span><span class="dots flex-grow-1"></span>
        <div class="d-flex">
          <button class="dock-btn" aria-label="フロート"><svg width="8" height="8"><path d="M3 1h4v4H3zM1 3h4v4H1z" fill="#fff" stroke="#111"/></svg></button>
          <button class="dock-btn" aria-label="パネルを閉じる"><svg width="8" height="8"><path d="M1.500 1.500l5 5M6.500 1.500l-5 5" stroke="#111" stroke-width="1.500"/></svg></button>
        </div>
      </div>
      <div class="dock-tools d-flex align-items-center">
        <div class="tools" data-tools="grp,b-plus eye funnel expand collapse rm,b-min"></div>
      </div>
      <div class="tree-box flex-grow-1">
        <div class="tree-row picked d-flex align-items-center">
          <svg viewBox="0 0 46 11" aria-hidden="true"><path d="M5 2.500h6v6H5zM6 5.500h4M12 5.500h4" fill="none" stroke="#999"/><rect x="16.500" y=".5" width="9" height="9" fill="#eee" stroke="#ccc"/><path d="M19 3l5 5M24 3l-5 5" stroke="#000" stroke-width="2"/><path d="M30 0h11v11H30z" fill="#6ea2db"/><path d="M30 0h4v4h-4zM37 0h4v4h-4zM34 4h3v4h-3z" fill="#214f83"/><path d="M37 8h4v3h-4z" fill="#fff"/></svg>
          <strong class="layer-name"><u>kagawa4kei</u></strong>
        </div>
        <div class="tree-row d-flex align-items-center">
          <svg viewBox="0 0 46 11" aria-hidden="true"><path d="M22.500 0v11M22.500 5.500h7" stroke="#aaa" stroke-dasharray="1 1"/><path d="M31 0h11v11H31z"/></svg>
          <span>-0.0371699</span>
        </div>
        <div class="tree-row d-flex align-items-center">
          <svg viewBox="0 0 46 11" aria-hidden="true"><path d="M22.500 0v5.500h7" fill="none" stroke="#aaa" stroke-dasharray="1 1"/></svg>
          <span>162.632</span>
        </div>
      </div>
    </aside>
    <section class="canvas flex-grow-1" aria-label="地図">
      <svg width="100%" height="100%" viewBox="269 142 632 528" role="img" aria-label="標高ラスタ">
        <defs>
          <filter id="rough" x="-5%" y="-5%" width="110%" height="110%"><feTurbulence type="fractalNoise" baseFrequency=".3" numOctaves="2" seed="4" result="n"/><feDisplacementMap in="SourceGraphic" in2="n" scale="5" xChannelSelector="R" yChannelSelector="G"/></filter>
          <filter id="soft3" x="-50%" y="-50%" width="200%" height="200%"><feGaussianBlur stdDeviation="3"/></filter>
          <filter id="soft4" x="-50%" y="-50%" width="200%" height="200%"><feGaussianBlur stdDeviation="4"/></filter>
          <filter id="soft7" x="-50%" y="-50%" width="200%" height="200%"><feGaussianBlur stdDeviation="7"/></filter>
          <path id="isl" d="M529 211l5 0 7-4 4 5 9 5v12l-4 4 1 12 2 12 4 20-4 17-2 10-5 12-9 5-8 1-9-5-6 8-14 23-10 18-12 10-8 4h-6l-6-10-2-12 1-13 9-13 14-15 11-15 3-13 6-10 2-10 5-12 9-14 7-7 2-10z"/>
          <path id="isl2" d="M787 175l-2 6-5 3 1 7 6 4 4 14 1 12-1 8-4 6-7 1-8 1-6 5-5 10 5 6 10-3 11-1 13-2 7-6 2-7 11-6-5-5-8-12-8-14-4-10 5-9-8-2z"/>
          <path id="isl3" d="M865 269l3 3h9l1 5 6 5v31l-4 1v6h-9l-1-8-1-9-7-5-4-8 1-12-2-2 6-2z"/>
          <path id="land" d="M285 648V558l5-3 1-13 5-1-1-8h-4v-11h6l3-23 20 3v15l8 6 29 4v5h19l2-9h10l10 1 0-4h7l15 10 18 3 9 2 0 2 17 0 1 4 11-3 2-4 4 5h6v-9l18-9 12-13h5l-2 9 3 4 3 5 8 10h360V648z"/>
          <clipPath id="c1"><use href="#isl"/></clipPath><clipPath id="c2"><use href="#isl2"/></clipPath><clipPath id="c3"><use href="#isl3"/></clipPath>
          <clipPath id="c4"><path d="M285 480h601v166l-211 1-390 1z"/></clipPath>
        </defs>
        <g filter="url(#rough)">
          <use href="#isl"/><use href="#isl2"/><use href="#isl3"/>
          <path d="M864 188l4 1 4 6v5l-14 1v-5l5-3zM755 211l2-5 4-2 0 4zM775 197l3-2zM754 252h3v2h-3z" stroke="#000"/>
        </g>
        <g clip-path="url(#c1)">
          <path d="M522 302l-34 42-17 22" stroke="#888" stroke-width="25" stroke-linecap="round" fill="none" filter="url(#soft4)"/>
          <ellipse cx="525" cy="273" rx="19" ry="27" fill="#777" filter="url(#soft7)"/>
          <path d="M512 306l-24 34-18 24" stroke="#fff" stroke-width="11" stroke-linecap="round" fill="none" filter="url(#soft4)"/>
          <circle cx="527" cy="275" r="9" fill="#fff" filter="url(#soft4)"/>
          <path d="M527 275l-14-16M527 275l4-26M527 275l18-10M527 275l16 12M527 275l-16 12" stroke="#999" stroke-width="2" filter="url(#soft3)"/>
          <ellipse cx="541" cy="222" rx="7" ry="6" fill="#555" filter="url(#soft4)"/>
          <path d="M528 247h1M543 216h1M546 230h1M533 238h1M541 245h1M545 258h1M537 252h1" stroke="#fff" stroke-width="1.500"/>
        </g>
        <g clip-path="url(#c2)"><g filter="url(#soft4)"><circle cx="789" cy="187" r="6" fill="#666"/><path d="M766 247l24-5 20-14" stroke="#777" stroke-width="9" fill="none"/></g></g>
        <path d="M796 238a2 1.500 0 1 0 .1 0z" fill="#fff"/>
        <g clip-path="url(#c3)"><path d="M868 282l8 20" stroke="#888" stroke-width="10" filter="url(#soft4)"/></g>
        <path d="M870 163h13l-7 3zM752 243h1v2h-1zM786 217h1v1h-1zM881 193h1v1h-1zM285 494h1v6h-1zM547 165h2v2h-2z"/>
        <g clip-path="url(#c4)">
          <use href="#land"/>
          <path d="M330 510l32 4-2 8-30-5zM518 508l16-24" stroke="#000" stroke-width="1"/>
          <g filter="url(#soft7)"><path d="M362 650l2-40 12-20 18-8 16 8 10 20 26 8 12 32z" fill="#888"/><path d="M380 650v-36l20-8 14 12 2 32z" fill="#fff"/><ellipse cx="432" cy="644" rx="12" ry="12" fill="#fff"/><circle cx="882" cy="638" r="13" fill="#bbb"/></g>
          <path d="M380 614h30l6 12-8 24h-25z" fill="#fff" filter="url(#soft3)"/>
          <path d="M404 640c10-18 28-24 44-22" stroke="#333" stroke-width="5" fill="none" filter="url(#soft3)" opacity=".8"/>
          <circle cx="475" cy="645" r="7" fill="#aaa" filter="url(#soft4)"/>
          <g fill="#fff">
            <path d="M320 500h10l-2 24-6 22-4 18-7 24-2 30-3 30h-5l1-26 3-32 6-30 5-20z"/>
            <path d="M388 520h11l-2 28-14 32-10 16-16 20-4 18 1 16h-4l1-14-3-8 2-13 18-24 14-24 6-24z"/>
            <path d="M331 517l29 5-1 5-30-5zM354 529h5l-4 13zM426 552l8 2 3 5 5-14-2-12h7v14l8 3 11-3 1 8-20 6-20-1zM292 536l4 1-1 8-4 4v8h-5v-20zM524 546l5-3v4zM531 544h4v3h-4zM527 556h10v2h-10z"/>
          </g>
          <path d="M421 530v36l6 18 5 13" stroke="#fff" stroke-width="2" fill="none"/>
          <path d="M434 599l10 7M452 621l6 3M331 557l18 4" stroke="#fff" fill="none" stroke-dasharray="3 3"/>
          <path d="M617 608c-3 14-14 17-28 24-8 4-12 8-13 15" stroke="#fff" stroke-width="2" fill="none"/>
          <path d="M629 609l18 2-1 36M742 608l5 39" stroke="#fff" stroke-width="3" fill="none"/>
          <path d="M693 608h9l-3 39h-4zM849 634l8-7 2 5-6 5-4-1zM865 624h3v2h-3zM839 640l3 5h-3z" fill="#fff"/>
          <path d="M634 612l10 4M660 610h4M666 624h3M684 624l4 4M665 630v10M791 610v14M652 620l3 2M680 622h3" stroke="#fff" stroke-dasharray="2 2"/>
        </g>
      </svg>
    </section>
  </main>

  <footer class="status d-flex align-items-center">
    <button class="dock-btn extent-btn ms-auto align-items-center justify-content-center" aria-label="範囲を切替"><svg width="11" height="11" viewBox="0 0 12 12"><circle cx="4" cy="4" r="3" fill="#999" stroke="#222"/><circle cx="8" cy="8" r="3" fill="none" stroke="#222" stroke-width="1.500"/></svg></button>
    <label for="coord" class="ms-2">座標:</label>
    <input id="coord" class="coord" type="text" value="57162,156371">
    <label for="scale" class="ms-2 me-2">縮尺</label>
    <span class="position-relative d-flex">
      <select id="scale" class="scale-box"><option>1:51,088</option></select>
      <svg class="pick-arrow" width="12" viewBox="0 0 12 15" aria-hidden="true"><path d="M.5 1v13" stroke="#ccc"/><path d="M3 6h6l-3 4z"/></svg>
    </span>
    <label for="rotation" class="ms-2 me-1">回転:</label>
    <span class="position-relative d-flex">
      <input id="rotation" class="spin-box" type="text" value="0.0">
      <svg class="pick-arrow" width="12" viewBox="0 0 12 15" aria-hidden="true"><path d="M.5 1v13M1 7.500h11" stroke="#ccc"/><path d="M3 5h6L6 2zM3 10h6l-3 3z"/></svg>
    </span>
    <input id="render" class="tick ms-1 me-1" type="checkbox" checked>
    <label for="render">レンダ</label>
    <svg class="ms-2 me-1" width="11" height="11" viewBox="0 0 12 12" aria-hidden="true"><circle cx="6" cy="6" r="4" fill="#aaa" stroke="#333" stroke-width="2"/><path d="M6 0v12M0 6h12" stroke="#444"/></svg>
    <a href="#" class="text-reset text-decoration-none">EPSG:2446 (OTF)</a>
    <svg class="ms-3" width="12" height="12" viewBox="0 0 12 12" role="img" aria-label="メッセージ"><ellipse cx="6" cy="5" rx="5.500" ry="4.500" fill="#666"/><path d="M7 8l4 4V6z" fill="#666"/></svg>
  </footer>
</div>

<svg class="arrow-over" viewBox="450 138 170 190" aria-hidden="true"><path d="M461 141L604 313" stroke="#f00" stroke-width="6"/><path d="M612 324l-4-20-14 12z" fill="#f00" stroke="#f00" stroke-width="1"/></svg>

<div class="dlg-wrap" role="dialog" aria-labelledby="dlg-name">
  <div class="dlg">
    <div class="dlg-title d-flex align-items-center">
      <svg class="ms-1 me-2" width="21" height="24" viewBox="0 0 20 20" aria-hidden="true"><use href="#leaf"/></svg>
      <span id="dlg-name" class="title-glow text-nowrap">GRASSマップセットを選択</span>
      <div class="d-flex ms-auto align-self-start">
        <button class="dlg-ctl ctl-help" aria-label="ヘルプ"><svg width="20" height="22" viewBox="0 0 20 22"><path d="M5.500 8c0-6 9-6 9-1 0 3-4.500 3-4.500 7M10 16v3" fill="none" stroke="#33415c" stroke-width="5"/><path d="M5.500 8c0-6 9-6 9-1 0 3-4.500 3-4.500 7M10 16v3" fill="none" stroke="#fff" stroke-width="3"/></svg></button>
        <button class="dlg-ctl ctl-x" aria-label="閉じる"><svg width="20" height="18" viewBox="0 0 20 18"><path d="M4 3l12 12M16 3L4 15" stroke="#47343a" stroke-width="6"/><path d="M4 3l12 12M16 3L4 15" stroke="#fff" stroke-width="4"/></svg></button>
      </div>
    </div>
    <form class="dlg-body">
      <div class="form-line">
        <label for="gisdbase">Gisdbase</label>
        <div class="d-flex align-items-center gap-3"><input id="gisdbase" class="fld flex-grow-1" type="text" value="ents¥grass-gis¥test"><button type="button" class="push flex-shrink-0">参照...</button></div>
      </div>
      <div class="form-line mt-3">
        <label for="location">位置</label>
        <div class="position-relative d-flex"><select id="location" class="fld w-100"><option>test_kagawa</option></select>
        <svg class="pick-arrow" width="26" viewBox="0 0 26 31" aria-hidden="true"><path d="M.5 2v27" stroke="#bcbcbc"/><path d="M7 13h12l-6 6z"/></svg></div>
      </div>
      <div class="form-line mt-2 pt-1">
        <label for="mapset-pick">Mapset</label>
        <div class="position-relative d-flex"><select id="mapset-pick" class="fld w-100"><option>takamatsu</option></select><span class="focus-dots"></span>
        <svg class="pick-arrow" width="26" viewBox="0 0 26 31" aria-hidden="true"><path d="M.5 2v27" stroke="#bcbcbc"/><path d="M7 13h12l-6 6z"/></svg></div>
      </div>
      <div class="rule"></div>
      <div class="d-flex justify-content-end align-items-center">
        <button type="button" class="push push-ok">OK</button><button type="button" class="push">キャンセル</button>
      </div>
    </form>
  </div>
</div>

<script>
// Each toolbar lists its tools; commas stack symbols, "!" marks the pressed tool.
document.querySelectorAll('[data-tools]').forEach(function (bar) {
  bar.innerHTML = bar.dataset.tools.split(' ').map(function (item) {
    var pressed = item.endsWith('!');
    var parts = item.replace('!', '').split(',');
    var drop = parts[0].startsWith('caret');
    var cls = (drop ? 'drop ' : '') + (pressed ? 'active-tool' : '');
    var uses = parts.map(function (p) { return '<use href="#' + p + '"/>'; }).join('');
    return '<button type="button" class="' + cls + '" aria-label="' + parts[0] + '"><svg viewBox="0 0 ' + (drop ? 8 : 20) + ' 20">' + uses + '</svg></button>';
  }).join('');
});
</script>
</body>
</html>
